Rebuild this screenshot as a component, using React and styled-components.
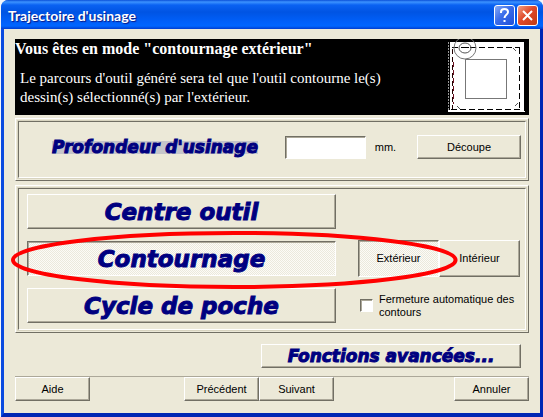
import React, { useState } from 'react';
import styled, { createGlobalStyle, css } from 'styled-components';

const GlobalStyle = createGlobalStyle`
    * {
        box-sizing: border-box;
    }

    body {
        margin: 0;
        background: #f4f6fb;
        font-family: "Liberation Sans", Arial, sans-serif;
        font-size: 11px;
        color: #000;
    }
`;

const raised = css`
    border: 1px solid;
    border-color: #fff #716f64 #716f64 #fff;
    box-shadow: inset -1px -1px 0 #aca899;
`;

const sunken = css`
    border: 1px solid;
    border-color: #716f64 #fff #fff #716f64;
    box-shadow: inset 1px 1px 0 #aca899;
`;

const hatch = css`
    background: repeating-conic-gradient(#fcfbf7 0% 25%, #ebe9dc 0% 50%) 0 0 / 2px 2px;
`;

const Window = styled.main`
    margin: 0 0 0 1px;
    background: #ece9d8;
    border: 3px solid #0a4be0;
    border-top: 0;
    border-right-color: #0026b4;
    border-bottom: 4px solid #0026b4;
    border-radius: 8px 8px 0 0;
`;

const TitleBar = styled.header`
    display: flex;
    align-items: center;
    gap: 2px;
    height: 29px;
    margin: 0 -3px;
    padding: 2px 5px 0 7px;
    border-radius: 7px 7px 0 0;
    background: linear-gradient(#0a50d8 0, #3c93ff 2px, #0a62f2 5px, #0054e3 12px, #0060fa 22px, #0066ff 26px, #003dd0 29px);
`;

const Title = styled.h1`
    flex: 1;
    margin: 0;
    color: #fff;
    font: bold 14px/18px Lato, sans-serif;
    text-shadow: 1px 1px 1px #0a1883;
`;

const CaptionButton = styled.button`
    display: grid;
    place-items: center;
    width: 21px;
    height: 21px;
    padding: 0;
    border: 1px solid #fff;
    border-radius: 3px;
    background: ${({ $close }) => $close
        ? 'linear-gradient(135deg, #f0a084, #e0492a 45%, #c13a12)'
        : 'linear-gradient(135deg, #86aaf5, #3a6cea 45%, #1f4fd8)'};
`;

const Content = styled.div`
    padding: 10px 11px 12px;
`;

const Banner = styled.section`
    display: flex;
    justify-content: space-between;
    min-height: 76px;
    padding-right: 4px;
    background: #000;
    color: #fff;
    font-family: "Liberation Serif", "Times New Roman", serif;
`;

const BannerTitle = styled.h2`
    margin: 0;
    font-size: 16px;
    line-height: 20px;
`;

const BannerText = styled.p`
    max-width: 400px;
    margin: 10px 0 0 5px;
    font-size: 15px;
    line-height: 19px;
`;

const Preview = styled.svg`
    flex: none;
    width: 80px;
    height: 76px;
`;

const Panel = styled.section`
    position: relative;
    margin-top: ${({ $gap }) => $gap}px;
    padding: 2px;
    border: 1px solid;
    border-color: #fff #716f64 #716f64 #fff;
`;

const PanelInner = styled.div`
    display: flex;
    align-items: center;
    justify-content: space-between;
    padding: ${({ $pad }) => $pad};
    border: 1px solid;
    border-color: #716f64 #fff #fff #716f64;
    outline: 1px solid #d8d4c0;
`;

const DepthLabel = styled.label`
    padding-right: 6px;
    color: #000080;
    font: italic bold 17px/13px "DejaVu Sans", sans-serif;
    -webkit-text-stroke: 1px #000080;

    span {
        display: block;
        background: #c5c5ca;
    }
`;

const DepthField = styled.div`
    display: flex;
    align-items: center;
    gap: 9px;
`;

const DepthInput = styled.input`
    ${sunken}
    width: 81px;
    height: 23px;
    background: #fff;
`;

const Button = styled.button`
    ${raised}
    width: ${({ $width }) => $width}px;
    height: ${({ $height }) => $height || 24}px;
    padding: 0;
    background: #ece9d8;
    color: #000;
    font: 11px/13px "Liberation Sans", Arial, sans-serif;
    ${({ $pressed }) => $pressed && css`
        ${sunken}
        ${hatch}
    `}
`;

const ModeButton = styled(Button)`
    width: 100%;
    color: #000080;
    font: italic bold 23px/26px "DejaVu Sans", sans-serif;
    -webkit-text-stroke: 1px #000080;
`;

const AdvancedButton = styled(Button)`
    color: #000080;
    font: italic bold 17px/18px "DejaVu Sans", sans-serif;
    -webkit-text-stroke: 1px #000080;
`;

const Modes = styled.div`
    display: grid;
    grid-template-columns: 309fr 162fr;
    grid-template-rows: 35px 37px 35px;
    column-gap: 22px;
    row-gap: 11px;
    align-items: center;
    width: 100%;
`;

const Sides = styled.div`
    display: grid;
    grid-template-columns: 1fr 1fr;
    grid-column: 2;
`;

const SideButton = styled(Button)`
    width: 100%;
`;

const Closing = styled.label`
    display: flex;
    align-items: center;
    gap: 6px;
    padding-left: 2px;
    line-height: 13px;
`;

const CheckBox = styled.input`
    ${sunken}
    flex: none;
    appearance: none;
    width: 13px;
    height: 13px;
    margin: 0;
    background: #fff;

    &:checked {
        background: #000080;
    }
`;

// Drawn over the selected mode and its side button
const Highlight = styled.svg`
    position: absolute;
    top: 45px;
    left: -5px;
    width: 88%;
    height: 60px;
    overflow: visible;
    pointer-events: none;
`;

const Advanced = styled.div`
    display: flex;
    justify-content: flex-end;
    padding: 11px 8px 8px;
`;

const Footer = styled.footer`
    display: grid;
    grid-template-columns: 169fr auto 195fr;
    border-top: 1px solid #aca899;
`;

const FooterEnd = styled.div`
    text-align: right;
`;

const MODES = ['Centre outil', 'Contournage', 'Cycle de poche'];

const ToolPreview = () => (
    <Preview viewBox="0 0 80 76" aria-hidden="true">
        <path d="M5 3H79V72H80V73H3V71H5Z" fill="#fff" />
        <path d="M3.5 3V71" stroke="#999" strokeDasharray="2 1" />
        <rect x="20.5" y="20.5" width="41" height="39" fill="none" stroke="#777" />
        <path d="M7 8.500H75" stroke="#000" strokeDasharray="6 3" />
        <path d="M74.500 9V71" stroke="#000" strokeDasharray="6 3" />
        <path d="M6 70.500H75" stroke="#000" strokeDasharray="6 3" />
        <path d="M7.500 10V70" stroke="#200" strokeWidth="1" strokeDasharray="5 3" />
        <path d="M8.500 23V65" stroke="#6b1020" strokeDasharray="5 3" />
        <path d="M68 9L71 12M12 67L15 70M73 64L70 67" stroke="#555" />
        <circle cx="20" cy="9" r="11" fill="none" stroke="#777" />
        <ellipse cx="20" cy="9" rx="6" ry="5" fill="none" stroke="#555" />
        <path d="M16 8.500H24" stroke="#000" />
    </Preview>
);

const App = () => {
    const [mode, setMode] = useState('Contournage');
    const [side, setSide] = useState('Extérieur');

    return (
        <>
            <GlobalStyle />
            <Window>
                <TitleBar>
                    <Title>Trajectoire d'usinage</Title>
                    <CaptionButton type="button" aria-label="Aide contextuelle">
                        <svg width="15" height="17" viewBox="0 0 15 17" fill="none" stroke="#fff" strokeWidth="2">
                            <path d="M4 6V5C4 1 11 1 11 5C11 8 7.500 7.500 7.500 11M7.500 13V15" />
                        </svg>
                    </CaptionButton>
                    <CaptionButton type="button" aria-label="Fermer" $close>
                        <svg width="15" height="15" viewBox="0 0 15 15" stroke="#fff" strokeWidth="2">
                            <path d="M3 3L12 12M12 3L3 12" />
                        </svg>
                    </CaptionButton>
                </TitleBar>
                <Content>
                    <Banner>
                        <div>
                            <BannerTitle>Vous êtes en mode "contournage extérieur"</BannerTitle>
                            <BannerText>
                                Le parcours d'outil généré sera tel que l'outil contourne le(s)<br />
                                dessin(s) sélectionné(s) par l'extérieur.
                            </BannerText>
                        </div>
                        <ToolPreview />
                    </Banner>

                    <Panel $gap={3}>
                        <PanelInner $pad="13px 4px 18px 33px">
                            <DepthLabel htmlFor="depth"><span>Profondeur d'usinage</span></DepthLabel>
                            <DepthField>
                                <DepthInput id="depth" type="text" />
                                <span>mm.</span>
                            </DepthField>
                            <Button type="button" $width={104}>Découpe</Button>
                        </PanelInner>
                    </Panel>

                    <Panel $gap={4}>
                        <PanelInner $pad="5px 5px 6px 8px">
                            <Modes>
                                {MODES.map((name) => (
                                    <React.Fragment key={name}>
                                        <ModeButton
                                            type="button"
                                            $height={35}
                                            $pressed={mode === name}
                                            aria-pressed={mode === name}
                                            onClick={() => setMode(name)}
                                        >
                                            {name}
                                        </ModeButton>
                                        {name === 'Centre outil' && <span />}
                                        {name === 'Contournage' && (
                                            <Sides>
                                                {['Extérieur', 'Intérieur'].map((label) => (
                                                    <SideButton
                                                        key={label}
                                                        type="button"
                                                        $height={37}
                                                        $pressed={side === label}
                                                        aria-pressed={side === label}
                                                        onClick={() => setSide(label)}
                                                    >
                                                        {label}
                                                    </SideButton>
                                                ))}
                                            </Sides>
                                        )}
                                        {name === 'Cycle de poche' && (
                                            <Closing>
                                                <CheckBox type="checkbox" />
                                                <span>Fermeture automatique des contours</span>
                                            </Closing>
                                        )}
                                    </React.Fragment>
                                ))}
                            </Modes>
                        </PanelInner>
                        <Highlight viewBox="0 0 452 60" preserveAspectRatio="none" aria-hidden="true">
                            <ellipse cx="224" cy="29" rx="222" ry="27" fill="none" stroke="#f00" strokeWidth="4" />
                        </Highlight>
                    </Panel>

                    <Advanced>
                        <AdvancedButton type="button" $width={260}>Fonctions avancées...</AdvancedButton>
                    </Advanced>

                    <Footer>
                        <div>
                            <Button type="button" $width={75}>Aide</Button>
                        </div>
                        <div>
                            <Button type="button" $width={75}>Précédent</Button>
                            <Button type="button" $width={75}>Suivant</Button>
                        </div>
                        <FooterEnd>
                            <Button type="button" $width={75}>Annuler</Button>
                        </FooterEnd>
                    </Footer>
                </Content>
            </Window>
        </>
    );
};

export default App;
